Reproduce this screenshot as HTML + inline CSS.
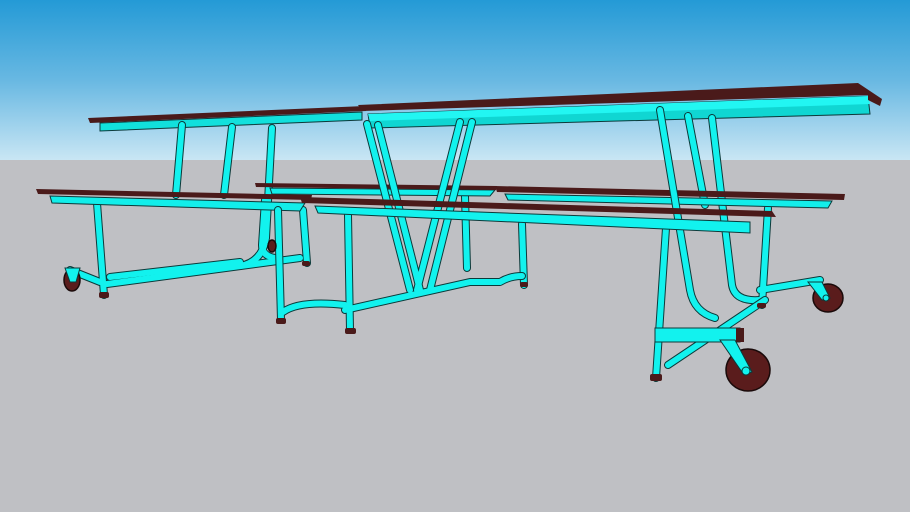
<!DOCTYPE html>
<html><head><meta charset="utf-8"><style>
html,body{margin:0;padding:0;width:910px;height:512px;overflow:hidden}
svg{display:block}
.t{fill:none;stroke-linecap:round;stroke-linejoin:round}
.o{stroke:#0c3a3a;stroke-width:8}
.c{stroke:#12f2ee;stroke-width:6}
</style></head><body>
<svg width="910" height="512" viewBox="0 0 910 512" xmlns="http://www.w3.org/2000/svg">
<defs>
<linearGradient id="sky" x1="0" y1="0" x2="0" y2="1">
<stop offset="0" stop-color="#249ad6"/><stop offset="0.5" stop-color="#68b8e2"/><stop offset="1" stop-color="#c9e6f4"/>
</linearGradient>
<g id="back">
<path d="M182,125 L176,195"/><path d="M232,127 L224,195"/>
<path d="M272,128 L266,238 Q262,262 240,266"/>
<path d="M97,203 L104,295"/><path d="M107,284 L300,258"/><path d="M110,277 L240,262"/>
<path d="M70,270 L100,282"/>
<path d="M303,210 L307,263"/><path d="M265,200 L262,245 Q262,256 275,258"/>
<path d="M465,196 L467,268"/><path d="M522,224 L524,285"/>
<path d="M768,208 L762,305"/><path d="M760,290 L820,280"/>
<path d="M712,118 L732,285 Q735,302 760,300"/>
<path d="M688,116 L705,205"/>
</g>
<g id="front">
<path d="M367,124 L410,290"/><path d="M378,125 L420,290"/>
<path d="M460,122 L417,290"/><path d="M472,122 L430,290"/>
<path d="M278,210 L281,320"/><path d="M283,312 Q300,300 345,305"/>
<path d="M345,310 L470,282 L500,282 Q510,276 522,276"/>
<path d="M348,215 L350,330"/>
<path d="M660,110 L690,290 Q694,312 715,318"/>
<path d="M666,228 L656,378"/>
<path d="M668,365 L765,300"/>
</g>
</defs>
<rect width="910" height="160" fill="url(#sky)"/>
<rect y="160" width="910" height="352" fill="#bfc0c4"/>
<!-- tops -->
<polygon points="100,123 362,112 362,120 100,131" fill="#12e0dc" stroke="#0c3a3a" stroke-width="1"/>
<polygon points="88,118 365,106 366,111 90,123" fill="#4a1a1a"/>
<polygon points="368,114 868,96 870,114 370,128" fill="#10d6d2" stroke="#0c3a3a" stroke-width="1"/>
<polygon points="368,114 868,96 870,104 370,121" fill="#22f6f2"/>
<polygon points="358,105 858,83 882,99 880,106 868,100 868,95 362,111" fill="#4a1a1a"/>
<g class="t o"><use href="#back"/></g><g class="t c"><use href="#back"/></g>
<!-- back benches -->
<polygon points="270,188 495,190 490,196 272,194" fill="#12eeea" stroke="#0c3a3a" stroke-width="1"/>
<polygon points="255,183 497,186 496,190 256,187" fill="#4a1a1a"/>
<polygon points="505,194 832,201 828,208 508,200" fill="#12eeea" stroke="#0c3a3a" stroke-width="1"/>
<polygon points="495,186 845,194 844,200 497,192" fill="#4a1a1a"/>
<polygon points="50,196 305,203 300,211 52,203" fill="#12eeea" stroke="#0c3a3a" stroke-width="1"/>
<polygon points="36,189 312,195 311,200 38,194" fill="#4a1a1a"/>
<g class="t o"><use href="#front"/></g><g class="t c"><use href="#front"/></g>
<!-- front bench -->
<polygon points="315,206 750,222 750,233 318,213" fill="#12f2ee" stroke="#0c3a3a" stroke-width="1"/>
<polygon points="300,197 772,211 776,217 302,203" fill="#4a1a1a"/>
<!-- right frame box -->
<rect x="655" y="328" width="85" height="14" fill="#12f2ee" stroke="#0c3a3a"/>
<rect x="736" y="328" width="8" height="14" fill="#4a1a1a"/>
<!-- feet -->
<g fill="#4a1a1a">
<rect x="99" y="292" width="10" height="6" rx="2"/><rect x="276" y="318" width="10" height="6" rx="2"/>
<rect x="345" y="328" width="11" height="6" rx="2"/><rect x="302" y="261" width="8" height="5" rx="2"/>
<rect x="520" y="282" width="8" height="5" rx="2"/><rect x="650" y="374" width="12" height="7" rx="2"/>
<rect x="757" y="303" width="9" height="5" rx="2"/>
</g>
<!-- wheels -->
<g stroke="#1a0a0a" stroke-width="1.5" fill="#5a1c1c">
<ellipse cx="72" cy="280" rx="8" ry="11"/>
<ellipse cx="828" cy="298" rx="15" ry="14"/>
<ellipse cx="748" cy="370" rx="22" ry="21"/>
<ellipse cx="272" cy="246" rx="4" ry="6"/>
</g>
<g fill="#12f2ee" stroke="#0c3a3a">
<polygon points="720,340 735,340 752,372 744,375"/><circle cx="746" cy="371" r="4"/>
<polygon points="808,282 822,282 830,298 822,300"/><circle cx="826" cy="298" r="3"/>
<polygon points="65,268 80,268 76,282 70,282"/>
</g>
</svg>
</body></html>
